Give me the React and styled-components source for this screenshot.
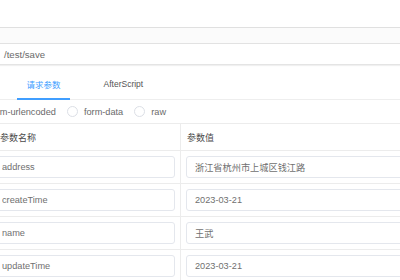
import React, { useState } from "react";
import styled, { createGlobalStyle } from "styled-components";

const GlobalStyle = createGlobalStyle`
  html, body {
    margin: 0;
    padding: 0;
    background: #fff;
    overflow: hidden;
  }
  body {
    font-family: "Liberation Sans", "Noto Sans CJK SC", sans-serif;
    font-size: 9.2px;
    color: #707070;
  }
`;

const Page = styled.div`
  width: 400px;
  height: 280px;
  overflow: hidden;
`;

const TopBar = styled.div`
  height: 27px;
  border-bottom: 1px solid #e0e0e0;
`;

const Band = styled.div`
  height: 15px;
  background: #fbfbfb;
  border-bottom: 1px solid #e2e2e2;
`;

const UrlRow = styled.div`
  height: 20px;
  display: flex;
  align-items: center;
  padding-left: 4px;
  font-size: 9.6px;
  color: #6a6a6a;
  border-bottom: 1px solid #e4e4e4;
  box-shadow: 0 1px 1px #f0f0f0;
`;

const Tabs = styled.div`
  display: flex;
  height: 33px;
  padding-left: 17px;
  gap: 24px;
  border-bottom: 1px solid #eeeeee;
  margin-top: 1px;
`;

const Tab = styled.div`
  display: flex;
  align-items: center;
  padding: 3px 9.5px 0;
  font-size: 8.5px;
  color: ${(p) => (p.$active ? "#409eff" : "#555")};
  border-bottom: 2px solid ${(p) => (p.$active ? "#409eff" : "transparent")};
  margin-bottom: -1px;
  cursor: pointer;
`;

const RadioRow = styled.div`
  height: 23px;
  display: flex;
  align-items: center;
  gap: 11px;
  margin-left: -28px;
`;

const RadioItem = styled.label`
  display: flex;
  align-items: center;
  gap: 6px;
  color: #6a6a6a;
  cursor: pointer;
`;

const Circle = styled.span`
  width: 9px;
  height: 9px;
  border-radius: 50%;
  border: 1px solid ${(p) => (p.$on ? "#409eff" : "#dcdfe6")};
  background: #fff;
  box-sizing: content-box;
  display: inline-flex;
  align-items: center;
  justify-content: center;
  &::after {
    content: "";
    width: 3px;
    height: 3px;
    border-radius: 50%;
    background: ${(p) => (p.$on ? "#409eff" : "transparent")};
  }
`;

const Table = styled.div`
  margin-left: -12px;
  width: 620px;
  border-top: 1px solid #ececec;
`;

const Row = styled.div`
  display: grid;
  grid-template-columns: 192px 1fr;
  border-bottom: 1px solid #ececec;
  height: ${(p) => (p.$head ? "26px" : "32px")};
`;

const Cell = styled.div`
  display: flex;
  align-items: center;
  padding: 0 5px;
  border-left: ${(p) => (p.$right ? "1px solid #ececec" : "none")};
`;

const HeadCell = styled(Cell)`
  padding: 0 ${(p) => (p.$right ? "6px" : "12px")};
  font-size: 9px;
  color: #4a4a4a;
`;

const Input = styled.input`
  width: 100%;
  height: 22px;
  box-sizing: border-box;
  border: 1px solid #e4e7ed;
  border-radius: 3px;
  padding: 0 8px;
  font: inherit;
  font-size: 9.2px;
  color: #707070;
  background: #fff;
  outline: none;
`;

const rows = [
  { key: "address", value: "浙江省杭州市上城区钱江路" },
  { key: "createTime", value: "2023-03-21" },
  { key: "name", value: "王武" },
  { key: "updateTime", value: "2023-03-21" },
];

const bodyTypes = ["form-urlencoded", "form-data", "raw"];

export default function App() {
  const [tab, setTab] = useState(0);
  const [bodyType, setBodyType] = useState("");

  return (
    <Page>
      <GlobalStyle />
      <TopBar />
      <Band />
      <UrlRow>/test/save</UrlRow>
      <Tabs>
        <Tab $active={tab === 0} onClick={() => setTab(0)}>
          请求参数
        </Tab>
        <Tab $active={tab === 1} onClick={() => setTab(1)}>
          AfterScript
        </Tab>
      </Tabs>
      <RadioRow>
        {bodyTypes.map((t) => (
          <RadioItem key={t} onClick={() => setBodyType(t)}>
            <Circle $on={bodyType === t} />
            {t}
          </RadioItem>
        ))}
      </RadioRow>
      <Table>
        <Row $head>
          <HeadCell>参数名称</HeadCell>
          <HeadCell $right>参数值</HeadCell>
        </Row>
        {rows.map((r) => (
          <Row key={r.key}>
            <Cell>
              <Input defaultValue={r.key} />
            </Cell>
            <Cell $right>
              <Input defaultValue={r.value} />
            </Cell>
          </Row>
        ))}
      </Table>
    </Page>
  );
}
